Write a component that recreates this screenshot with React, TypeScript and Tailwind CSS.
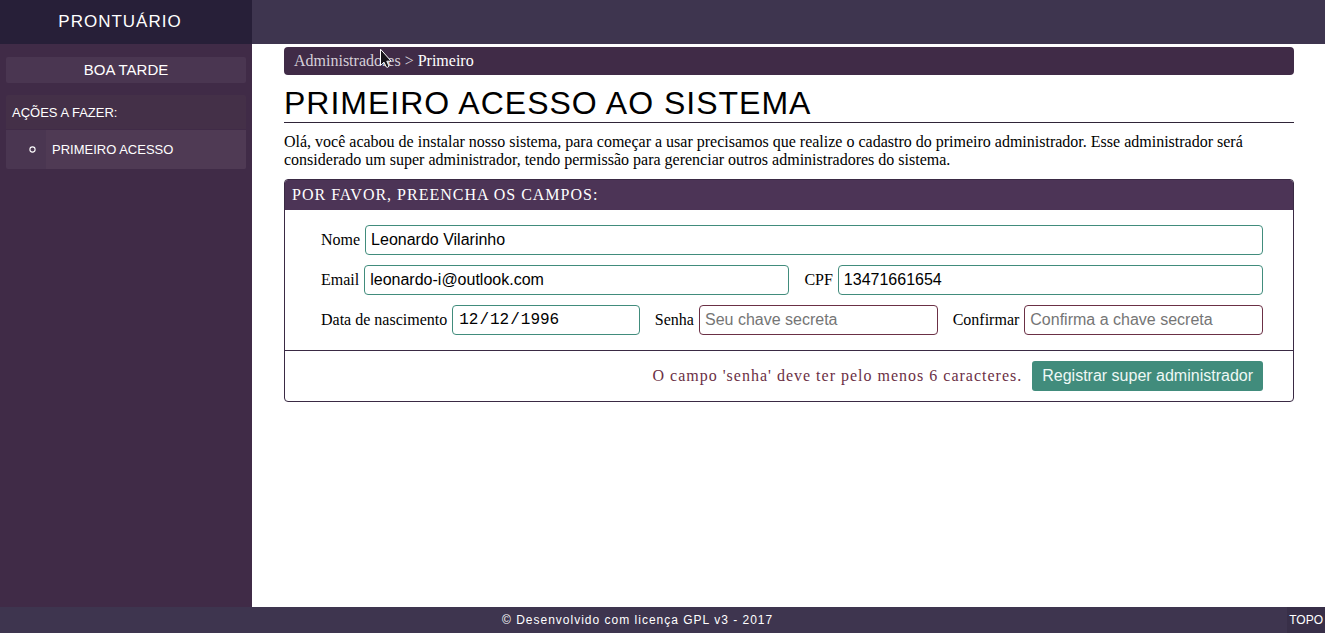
import type { InputHTMLAttributes } from 'react';

type FieldProps = InputHTMLAttributes<HTMLInputElement> & {
  id: string;
  label: string;
  invalid?: boolean;
};

function Field({ id, label, invalid = false, type = 'text', ...rest }: FieldProps) {
  const border = invalid ? 'border-[#6b3045]' : 'border-[#418c7c]';
  const font =
    type === 'date'
      ? "w-[137px] font-['Liberation_Mono',monospace] [&::-webkit-calendar-picker-indicator]:hidden"
      : "w-[188px] font-['Liberation_Sans',sans-serif]";
  return (
    <div className="flex min-w-0 flex-auto items-center">
      <label htmlFor={id} className="shrink-0 px-[5px] leading-[18px]">
        {label}
      </label>
      <input
        id={id}
        type={type}
        className={`h-[30px] min-w-0 flex-auto rounded-[4px] border bg-white px-[5px] text-base text-black outline-none placeholder:text-[#757575] ${border} ${font}`}
        {...rest}
      />
    </div>
  );
}

function Sidebar() {
  return (
    <aside className="w-[252px] shrink-0 bg-[#402b47] px-1.5 pt-[13px] font-['Liberation_Sans',sans-serif] text-white">
      <p className="rounded-[2px] bg-[#4a3651] text-center text-[15px] leading-[26px]">BOA TARDE</p>
      <nav className="mt-3 overflow-hidden rounded-[2px] text-[13px]">
        <h2 className="h-[34px] bg-[#443048] px-1.5 leading-[36px]">AÇÕES A FAZER:</h2>
        <ul className="mt-px">
          <li className="flex items-stretch bg-[#4a3651]">
            <span className="flex w-10 items-center justify-end pr-2.5">
              <svg width="7" height="7" viewBox="0 0 7 7" aria-hidden="true">
                <circle cx="3.5" cy="3.5" r="2.6" fill="none" stroke="white" strokeWidth="1.1" />
              </svg>
            </span>
            <a href="#primeiro" className="flex-1 bg-[#4f3a54] px-1.5 leading-[39px]">
              PRIMEIRO ACESSO
            </a>
          </li>
        </ul>
      </nav>
    </aside>
  );
}

function Pointer() {
  return (
    <svg
      className="pointer-events-none absolute top-[1px] left-[95px]"
      width="13"
      height="21"
      viewBox="0 0 13 21"
      aria-hidden="true"
    >
      <path
        d="M1.5 1.2V17.5L5 14.2L7.3 19Q8.6 20 10 18.2L7.8 13.2H12.2Z"
        fill="#17141a"
        stroke="white"
        strokeWidth="1"
      />
    </svg>
  );
}

export default function App() {
  return (
    <div
      id="topo"
      className="flex min-h-screen flex-col bg-white pb-[5px] font-['Liberation_Serif',serif] text-base text-black"
    >
      <header className="flex h-11 bg-[#3e354f] font-['Liberation_Sans',sans-serif]">
        <a
          href="#inicio"
          className="flex w-[252px] items-center justify-center bg-[#271f38] pr-3 text-[17px] tracking-[1px] text-white"
        >
          PRONTUÁRIO
        </a>
      </header>

      <div className="flex flex-1">
        <Sidebar />

        <main className="min-w-0 flex-1 pt-[3px] pr-[31px] pl-8">
          <nav className="relative rounded-[4px] bg-[#402b47] px-2.5 leading-7 text-white">
            <a href="#administradores" className="text-[#d5cfd8]">
              Administradores
            </a>
            <span className="text-[#d5cfd8]"> &gt; </span>
            <span>Primeiro</span>
            <Pointer />
          </nav>

          <h1 className="mt-2.5 border-b border-[#2f2438] font-['Liberation_Sans',sans-serif] text-[32px] leading-[37px] tracking-[1px]">
            PRIMEIRO ACESSO AO SISTEMA
          </h1>

          <p className="mt-2.5 leading-[18px]">
            Olá, você acabou de instalar nosso sistema, para começar a usar precisamos que realize o
            cadastro do primeiro administrador. Esse administrador será considerado um super
            administrador, tendo permissão para gerenciar outros administradores do sistema.
          </p>

          <form
            className="mt-2.5 overflow-hidden rounded-[4px] border border-[#3a2a44]"
            onSubmit={(event) => event.preventDefault()}
          >
            <h2 className="bg-[#4c3456] px-[7px] leading-[30px] tracking-[1px] text-white">
              POR FAVOR, PREENCHA OS CAMPOS:
            </h2>
            <div className="flex flex-col gap-2.5 py-[15px] pr-[30px] pl-[31px]">
              <Field id="nome" label="Nome" defaultValue="Leonardo Vilarinho" />
              <div className="flex gap-2.5">
                <Field id="email" label="Email" defaultValue="leonardo-i@outlook.com" />
                <Field id="cpf" label="CPF" defaultValue="13471661654" />
              </div>
              <div className="flex gap-2.5">
                <Field
                  id="nascimento"
                  label="Data de nascimento"
                  type="date"
                  defaultValue="1996-12-12"
                />
                <Field
                  id="senha"
                  label="Senha"
                  type="password"
                  placeholder="Seu chave secreta"
                  invalid
                />
                <Field
                  id="confirmar"
                  label="Confirmar"
                  type="password"
                  placeholder="Confirma a chave secreta"
                  invalid
                />
              </div>
            </div>
            <div className="flex items-center justify-end gap-2.5 border-t border-[#3a2a44] px-[30px] py-2.5">
              <p className="tracking-[1px] text-[#6b3045]">
                O campo 'senha' deve ter pelo menos 6 caracteres.
              </p>
              <button
                type="submit"
                className="h-[30px] rounded-[3px] bg-[#418c7c] px-2.5 font-['Liberation_Sans',sans-serif] text-[#eef8f5]"
              >
                Registrar super administrador
              </button>
            </div>
          </form>
        </main>
      </div>

      <footer className="flex h-[26px] items-center bg-[#3e354f] font-['Liberation_Sans',sans-serif] text-xs text-white">
        <p className="flex-1 pr-3 text-center tracking-[1px]">
          © Desenvolvido com licença GPL v3 - 2017
        </p>
        <a href="#topo" className="self-stretch bg-[#382f48] px-0.5 leading-[26px]">
          TOPO
        </a>
      </footer>
    </div>
  );
}
